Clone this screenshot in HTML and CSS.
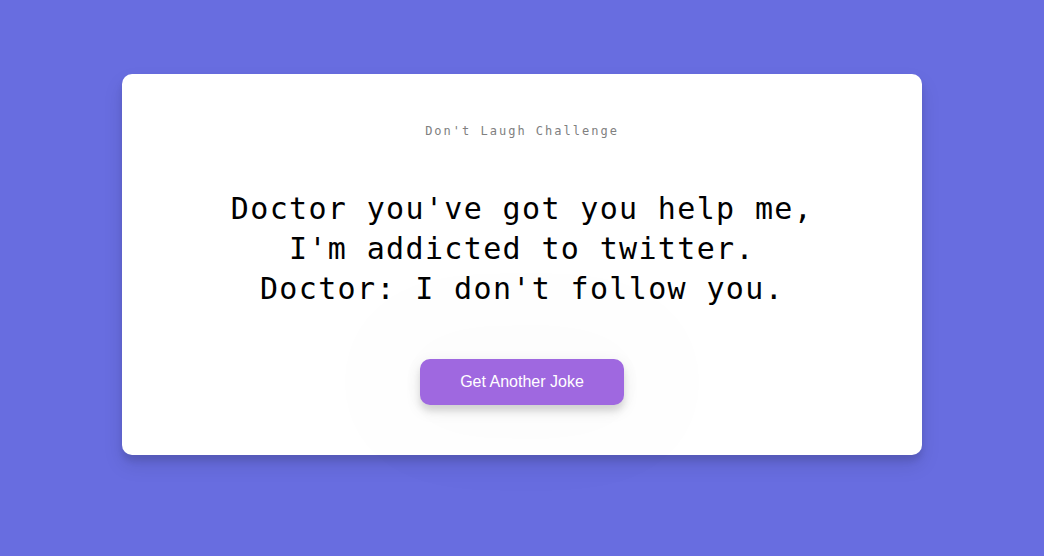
FILE: index.html
```html
<!DOCTYPE html>
<html lang="en">
<head>
<meta charset="UTF-8">
<title>Dad Jokes</title>
<link rel="stylesheet" href="styles.css">
</head>
<body>
  <div class="container">
    <h3 class="title">Don't Laugh Challenge</h3>
    <div class="joke">Doctor you've got you help me, I'm addicted to twitter. Doctor: I don't follow you.</div>
    <button class="btn">Get Another Joke</button>
  </div>
</body>
</html>
```
FILE: styles.css
```css
* { box-sizing: border-box; }

body {
  margin: 0;
  padding-top: 74px;
  height: 100vh;
  overflow: hidden;
  background-color: #686de0;
  display: flex;
  justify-content: center;
  align-items: flex-start;
  font-family: "DejaVu Sans Mono", "Liberation Mono", monospace;
}

.container {
  width: 800px;
  background-color: #fff;
  border-radius: 10px;
  box-shadow: 0 10px 20px rgba(0,0,0,0.1), 0 6px 6px rgba(0,0,0,0.1);
  padding: 50px 20px;
  text-align: center;
}

.title {
  margin: 0;
  font-size: 12px;
  line-height: 15px;
  font-weight: normal;
  letter-spacing: 2px;
  color: #808080;
}

.joke {
  font-size: 30px;
  letter-spacing: 1.35px;
  line-height: 40px;
  margin: 50px auto;
  max-width: 600px;
  color: #000;
}

.btn {
  background-color: #9f68e0;
  color: #fff;
  border: 0;
  border-radius: 10px;
  box-shadow: 0 5px 15px rgba(0,0,0,0.1), 0 6px 6px rgba(0,0,0,0.1), 0 0 120px 60px rgba(0,0,0,0.012);
  padding: 14px 40px;
  font-family: "Liberation Sans", Arial, sans-serif;
  font-size: 16px;
  line-height: 18px;
  cursor: pointer;
}
```
